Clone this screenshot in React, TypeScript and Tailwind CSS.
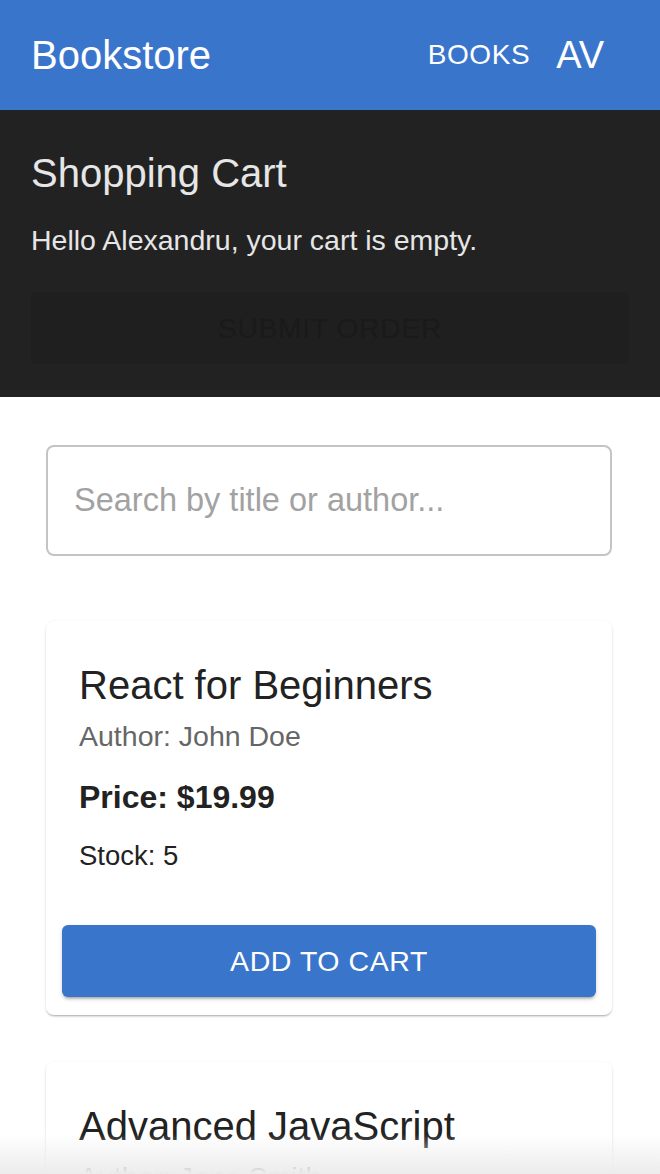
const books = [
  { title: "React for Beginners", author: "John Doe", price: 19.99, stock: 5 },
  { title: "Advanced JavaScript", author: "Jane Smith", price: 29.99, stock: 3 },
];

function BookCard({ book }: { book: (typeof books)[number] }) {
  return (
    <div className="rounded-[8px] bg-white shadow-[0_2px_2px_-1px_rgba(0,0,0,0.25),0_1px_3px_0_rgba(0,0,0,0.12)]">
      <div className="px-[33px] pt-[40px] pb-[51px]">
        <h2 className="text-[40px] leading-[48px] text-[#222]">{book.title}</h2>
        <p className="mt-[9px] text-[28.5px] leading-[37px] text-[#666]">
          Author: {book.author}
        </p>
        <p className="mt-[22px] text-[32px] font-bold leading-[40px] text-[#222]">
          Price: ${book.price.toFixed(2)}
        </p>
        <p className="mt-[21px] text-[27.5px] leading-[36px] text-[#222]">
          Stock: {book.stock}
        </p>
      </div>
      <div className="px-[16px] pb-[18px]">
        <button className="h-[72px] w-full rounded-[6px] bg-[#3a75cc] text-[28.5px] uppercase tracking-[0.02em] text-white shadow-[0_3px_3px_-2px_rgba(0,0,0,0.3),0_2px_4px_0_rgba(0,0,0,0.16)]">
          Add to cart
        </button>
      </div>
    </div>
  );
}

export default function App() {
  return (
    <div className="relative min-h-[1174px] bg-white font-['Liberation_Sans',Arial,sans-serif]">
      <header className="flex h-[110px] items-center justify-between bg-[#3a75cc] pl-[31px] pr-[56px] text-white">
        <span className="text-[40px] leading-none">Bookstore</span>
        <div className="flex items-center gap-[26px]">
          <button className="text-[28px] uppercase tracking-[0.02em]">Books</button>
          <span className="text-[38px] leading-none">AV</span>
        </div>
      </header>

      <section className="bg-[#222] px-[31px] pt-[39px] pb-[33px] text-[#e6e6e6]">
        <h1 className="text-[40px] leading-[48px]">Shopping Cart</h1>
        <p className="mt-[25px] text-[28.5px] leading-[36px]">
          Hello Alexandru, your cart is empty.
        </p>
        <button
          disabled
          className="mt-[34px] h-[72px] w-full rounded-[6px] bg-[#1f1f1f] text-[28.4px] uppercase tracking-[0.02em] text-[#1a1a1a]"
        >
          Submit order
        </button>
      </section>

      <main className="pl-[46px] pr-[48px] pt-[48px]">
        <input
          placeholder="Search by title or author..."
          className="h-[111px] w-full rounded-[8px] border-2 border-[#c4c4c4] px-[26px] text-[32.5px] text-[#222] outline-none placeholder:text-[#a2a2a2]"
        />
        <div className="mt-[65px] flex flex-col gap-[47px] pb-[40px]">
          {books.map((b) => (
            <BookCard key={b.title} book={b} />
          ))}
        </div>
      </main>

      <div className="pointer-events-none fixed inset-x-0 bottom-0 h-[40px] bg-gradient-to-b from-transparent to-[#ececec]" />
    </div>
  );
}
